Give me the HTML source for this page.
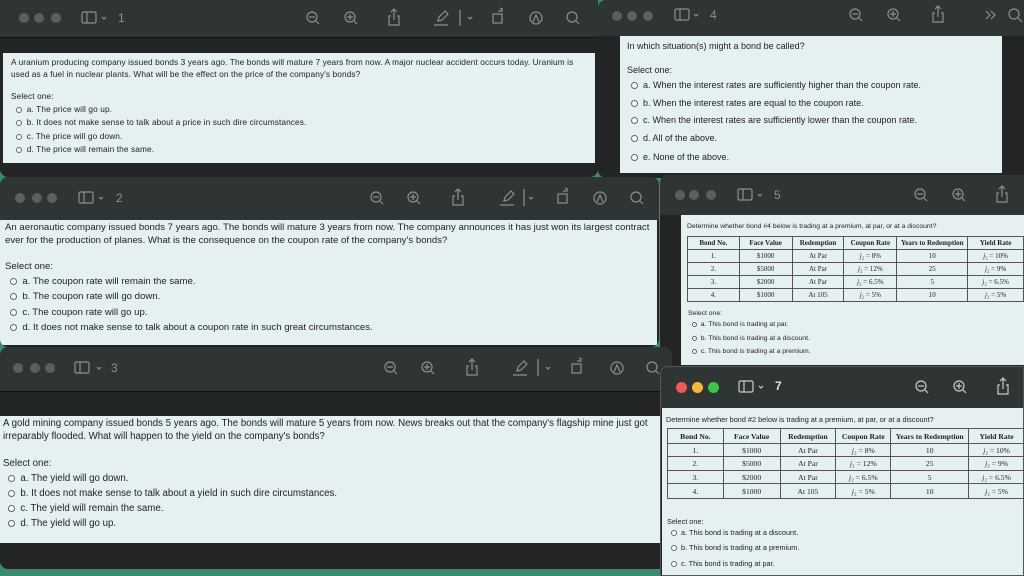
<!DOCTYPE html>
<html><head><meta charset="utf-8">
<style>
*{margin:0;padding:0;box-sizing:border-box}
body{width:1024px;height:576px;overflow:hidden;background:#3d8a72;font-family:"Liberation Sans",sans-serif;position:relative}
.w{position:absolute;background:#232524;border-radius:8px;overflow:hidden}
.tb{position:absolute;left:0;right:0;top:0;background:#2f3532}
.c{position:absolute;background:#e5f0f2;color:#222}
.t{position:absolute;white-space:nowrap;color:#222}
.d{position:absolute;width:10px;height:10px;border-radius:50%;background:#5a605d}
svg.i{position:absolute;overflow:visible}
.rb{display:inline-block;border:1px solid #666;border-radius:50%;background:#fff;vertical-align:middle}
table{position:absolute;border-collapse:collapse;font-family:"Liberation Serif",serif;color:#222;background:#e5f0f2}
td,th{border:1px solid #555;text-align:center;padding:0;font-weight:normal;white-space:nowrap}
th{font-weight:bold}
.num{position:absolute;color:#8a908d;font-size:12px}
</style></head><body>

<!-- Window 4 -->
<div class="w" style="left:598px;top:0;width:426px;height:178px;border-radius:8px 0 0 8px">
 <div class="tb" style="height:36px"></div>
 <div class="d" style="left:14px;top:11px"></div><div class="d" style="left:29px;top:11px"></div><div class="d" style="left:45px;top:11px"></div>
 <svg class="i" style="left:0;top:0" width="426" height="36" fill="none" stroke="#8a908d" stroke-width="1.2">
  <rect x="77" y="9" width="14" height="11" rx="1.5"/><line x1="82" y1="9" x2="82" y2="20"/>
  <path d="M96 14l2 2 2-2"/>
  <circle cx="257" cy="14" r="5"/><line x1="254" y1="14" x2="260" y2="14"/><line x1="261" y1="18" x2="264" y2="21"/>
  <circle cx="295" cy="14" r="5"/><line x1="292" y1="14" x2="298" y2="14"/><line x1="295" y1="11" x2="295" y2="17"/><line x1="299" y1="18" x2="302" y2="21"/>
  <path d="M337 13h-2v9h10v-9h-2M340 17v-11M337 9l3-3 3 3"/>
  <path d="M388 11l4 4-4 4M393 11l4 4-4 4"/>
  <circle cx="416" cy="14" r="5"/><line x1="420" y1="18" x2="424" y2="22"/>
 </svg>
 <div class="num" style="left:112px;top:8px">4</div>
 <div class="c" style="left:22px;top:36px;width:382px;height:137px;font-size:9px">
  <div class="t" style="left:7px;top:5px">In which situation(s) might a bond be called?</div>
  <div class="t" style="left:7px;top:29px">Select one:</div>
  <div class="t" style="left:11px;top:44px"><span class="rb" style="width:7px;height:7px"></span>&nbsp; a. When the interest rates are sufficiently higher than the coupon rate.</div>
  <div class="t" style="left:11px;top:62px"><span class="rb" style="width:7px;height:7px"></span>&nbsp; b. When the interest rates are equal to the coupon rate.</div>
  <div class="t" style="left:11px;top:79px"><span class="rb" style="width:7px;height:7px"></span>&nbsp; c. When the interest rates are sufficiently lower than the coupon rate.</div>
  <div class="t" style="left:11px;top:97px"><span class="rb" style="width:7px;height:7px"></span>&nbsp; d. All of the above.</div>
  <div class="t" style="left:11px;top:116px"><span class="rb" style="width:7px;height:7px"></span>&nbsp; e. None of the above.</div>
 </div>
</div>

<!-- Window 1 -->
<div class="w" style="left:0;top:0;width:598px;height:177px;border-radius:0 0 8px 8px">
 <div class="tb" style="height:38px;border-bottom:1px solid #111"></div>
 <div class="d" style="left:19px;top:13px"></div><div class="d" style="left:34px;top:13px"></div><div class="d" style="left:51px;top:13px"></div>
 <svg class="i" style="left:0;top:0" width="598" height="38" fill="none" stroke="#8a908d" stroke-width="1.2">
  <rect x="82" y="12" width="14" height="11" rx="1.5"/><line x1="87" y1="12" x2="87" y2="23"/>
  <path d="M102 17l2 2 2-2"/>
  <circle cx="312" cy="17" r="5"/><line x1="309" y1="17" x2="315" y2="17"/><line x1="316" y1="21" x2="319" y2="24"/>
  <circle cx="350" cy="17" r="5"/><line x1="347" y1="17" x2="353" y2="17"/><line x1="350" y1="14" x2="350" y2="20"/><line x1="354" y1="21" x2="357" y2="24"/>
  <path d="M391 16h-2v9h10v-9h-2M394 20v-11M391 12l3-3 3 3"/>
  <path d="M438 21l1-4 6-6 3 3-6 6zM434 25h14"/>
  <line x1="460" y1="10" x2="460" y2="26"/><path d="M468 17l2 2 2-2"/>
  <rect x="493" y="14" width="9" height="9"/><path d="M498 11h4v-3M500 8l2 1"/>
  <circle cx="536" cy="18" r="6"/><path d="M533 22l3-7 3 7"/>
  <circle cx="572" cy="17" r="5"/><line x1="576" y1="21" x2="579" y2="24"/>
 </svg>
 <div class="num" style="left:118px;top:11px">1</div>
 <div class="c" style="left:3px;top:53px;width:592px;height:110px;font-size:8.3px;letter-spacing:0.1px">
  <div class="t" style="left:8px;top:4px">A uranium producing company issued bonds 3 years ago. The bonds will mature 7 years from now. A major nuclear accident occurs today. Uranium is</div>
  <div class="t" style="left:8px;top:16px">used as a fuel in nuclear plants. What will be the effect on the price of the company's bonds?</div>
  <div class="t" style="left:8px;top:38px">Select one:</div>
  <div class="t" style="left:13px;top:51px"><span class="rb" style="width:6px;height:6px"></span>&nbsp; a. The price will go up.</div>
  <div class="t" style="left:13px;top:64px"><span class="rb" style="width:6px;height:6px"></span>&nbsp; b. It does not make sense to talk about a price in such dire circumstances.</div>
  <div class="t" style="left:13px;top:78px"><span class="rb" style="width:6px;height:6px"></span>&nbsp; c. The price will go down.</div>
  <div class="t" style="left:13px;top:91px"><span class="rb" style="width:6px;height:6px"></span>&nbsp; d. The price will remain the same.</div>
 </div>
</div>

<!-- Window 5 -->
<div class="w" style="left:660px;top:175px;width:364px;height:192px;border-radius:8px 0 0 0">
 <div class="tb" style="height:40px"></div>
 <div class="d" style="left:15px;top:15px"></div><div class="d" style="left:29px;top:15px"></div><div class="d" style="left:46px;top:15px"></div>
 <svg class="i" style="left:0;top:0" width="364" height="40" fill="none" stroke="#8a908d" stroke-width="1.2">
  <rect x="78" y="14" width="14" height="11" rx="1.5"/><line x1="83" y1="14" x2="83" y2="25"/>
  <path d="M98 19l2 2 2-2"/>
  <circle cx="260" cy="19" r="5"/><line x1="257" y1="19" x2="263" y2="19"/><line x1="264" y1="23" x2="267" y2="26"/>
  <circle cx="298" cy="19" r="5"/><line x1="295" y1="19" x2="301" y2="19"/><line x1="298" y1="16" x2="298" y2="22"/><line x1="302" y1="23" x2="305" y2="26"/>
  <path d="M339 18h-2v9h10v-9h-2M342 22v-11M339 14l3-3 3 3"/>
 </svg>
 <div class="num" style="left:114px;top:13px">5</div>
 <div class="c" style="left:21px;top:40px;width:343px;height:150px;font-size:6.8px">
  <div class="t" style="left:6px;top:8px">Determine whether bond #4 below is trading at a premium, at par, or at a discount?</div>
  <div class="t" style="left:7px;top:95px">Select one:</div>
  <div class="t" style="left:11px;top:106px"><span class="rb" style="width:5px;height:5px"></span>&nbsp; a. This bond is trading at par.</div>
  <div class="t" style="left:11px;top:120px"><span class="rb" style="width:5px;height:5px"></span>&nbsp; b. This bond is trading at a discount.</div>
  <div class="t" style="left:11px;top:133px"><span class="rb" style="width:5px;height:5px"></span>&nbsp; c. This bond is trading at a premium.</div>
 </div>
 <table style="left:27px;top:61px;width:337px;font-size:7px">
  <colgroup><col style="width:52px"><col style="width:53px"><col style="width:52px"><col style="width:53px"><col style="width:71px"><col style="width:56px"></colgroup>
  <tr style="height:13px"><th>Bond No.</th><th>Face Value</th><th>Redemption</th><th>Coupon Rate</th><th>Years to Redemption</th><th>Yield Rate</th></tr>
  <tr style="height:13px"><td>1.</td><td>$1000</td><td>At Par</td><td><i>j</i>₂ = 8%</td><td>10</td><td><i>j</i>₂ = 10%</td></tr>
  <tr style="height:13px"><td>2.</td><td>$5000</td><td>At Par</td><td><i>j</i>₂ = 12%</td><td>25</td><td><i>j</i>₂ = 9%</td></tr>
  <tr style="height:13px"><td>3.</td><td>$2000</td><td>At Par</td><td><i>j</i>₂ = 6.5%</td><td>5</td><td><i>j</i>₂ = 6.5%</td></tr>
  <tr style="height:13px"><td>4.</td><td>$1000</td><td>At 105</td><td><i>j</i>₂ = 5%</td><td>10</td><td><i>j</i>₂ = 5%</td></tr>
 </table>
</div>

<!-- Window 2 -->
<div class="w" style="left:0;top:177px;width:659px;height:170px">
 <div class="tb" style="height:43px"></div>
 <div class="d" style="left:15px;top:16px"></div><div class="d" style="left:32px;top:16px"></div><div class="d" style="left:47px;top:16px"></div>
 <svg class="i" style="left:0;top:0" width="659" height="43" fill="none" stroke="#8a908d" stroke-width="1.2">
  <rect x="79" y="15" width="14" height="11" rx="1.5"/><line x1="84" y1="15" x2="84" y2="26"/>
  <path d="M99 20l2 2 2-2"/>
  <circle cx="376" cy="20" r="5"/><line x1="373" y1="20" x2="379" y2="20"/><line x1="380" y1="24" x2="383" y2="27"/>
  <circle cx="413" cy="20" r="5"/><line x1="410" y1="20" x2="416" y2="20"/><line x1="413" y1="17" x2="413" y2="23"/><line x1="417" y1="24" x2="420" y2="27"/>
  <path d="M455 19h-2v9h10v-9h-2M458 23v-11M455 15l3-3 3 3"/>
  <path d="M504 24l1-4 6-6 3 3-6 6zM500 28h14"/>
  <line x1="524" y1="12" x2="524" y2="29"/><path d="M529 20l2 2 2-2"/>
  <rect x="558" y="17" width="9" height="9"/><path d="M563 14h4v-3M565 11l2 1"/>
  <circle cx="600" cy="21" r="6"/><path d="M597 25l3-7 3 7"/>
  <circle cx="636" cy="20" r="5"/><line x1="640" y1="24" x2="643" y2="27"/>
 </svg>
 <div class="num" style="left:116px;top:14px">2</div>
 <div class="c" style="left:0;top:43px;width:657px;height:125px;font-size:9.6px">
  <div class="t" style="left:5px;top:2px">An aeronautic company issued bonds 7 years ago. The bonds will mature 3 years from now. The company announces it has just won its largest contract</div>
  <div class="t" style="left:5px;top:15px">ever for the production of planes. What is the consequence on the coupon rate of the company's bonds?</div>
  <div class="t" style="left:5px;top:41px">Select one:</div>
  <div class="t" style="left:10px;top:56px"><span class="rb" style="width:7px;height:7px"></span>&nbsp; a. The coupon rate will remain the same.</div>
  <div class="t" style="left:10px;top:71px"><span class="rb" style="width:7px;height:7px"></span>&nbsp; b. The coupon rate will go down.</div>
  <div class="t" style="left:10px;top:87px"><span class="rb" style="width:7px;height:7px"></span>&nbsp; c. The coupon rate will go up.</div>
  <div class="t" style="left:10px;top:102px"><span class="rb" style="width:7px;height:7px"></span>&nbsp; d. It does not make sense to talk about a coupon rate in such great circumstances.</div>
 </div>
</div>

<!-- Window 3 -->
<div class="w" style="left:0;top:347px;width:672px;height:222px">
 <div class="tb" style="height:45px;border-bottom:1px solid #111"></div>
 <div class="d" style="left:13px;top:16px"></div><div class="d" style="left:30px;top:16px"></div><div class="d" style="left:45px;top:16px"></div>
 <svg class="i" style="left:0;top:0" width="672" height="45" fill="none" stroke="#8a908d" stroke-width="1.2">
  <rect x="75" y="15" width="14" height="11" rx="1.5"/><line x1="80" y1="15" x2="80" y2="26"/>
  <path d="M97 20l2 2 2-2"/>
  <circle cx="390" cy="20" r="5"/><line x1="387" y1="20" x2="393" y2="20"/><line x1="394" y1="24" x2="397" y2="27"/>
  <circle cx="427" cy="20" r="5"/><line x1="424" y1="20" x2="430" y2="20"/><line x1="427" y1="17" x2="427" y2="23"/><line x1="431" y1="24" x2="434" y2="27"/>
  <path d="M469 19h-2v9h10v-9h-2M472 23v-11M469 15l3-3 3 3"/>
  <path d="M517 24l1-4 6-6 3 3-6 6zM513 28h14"/>
  <line x1="538" y1="12" x2="538" y2="29"/><path d="M546 20l2 2 2-2"/>
  <rect x="572" y="17" width="9" height="9"/><path d="M577 14h4v-3M579 11l2 1"/>
  <circle cx="617" cy="21" r="6"/><path d="M614 25l3-7 3 7"/>
  <circle cx="652" cy="20" r="5"/><line x1="656" y1="24" x2="659" y2="27"/>
 </svg>
 <div class="num" style="left:111px;top:14px">3</div>
 <div class="c" style="left:0;top:69px;width:660px;height:127px;font-size:9.7px">
  <div class="t" style="left:3px;top:2px">A gold mining company issued bonds 5 years ago. The bonds will mature 5 years from now. News breaks out that the company's flagship mine just got</div>
  <div class="t" style="left:3px;top:15px">irreparably flooded. What will happen to the yield on the company's bonds?</div>
  <div class="t" style="left:3px;top:42px">Select one:</div>
  <div class="t" style="left:8px;top:57px"><span class="rb" style="width:7px;height:7px"></span>&nbsp; a. The yield will go down.</div>
  <div class="t" style="left:8px;top:72px"><span class="rb" style="width:7px;height:7px"></span>&nbsp; b. It does not make sense to talk about a yield in such dire circumstances.</div>
  <div class="t" style="left:8px;top:87px"><span class="rb" style="width:7px;height:7px"></span>&nbsp; c. The yield will remain the same.</div>
  <div class="t" style="left:8px;top:102px"><span class="rb" style="width:7px;height:7px"></span>&nbsp; d. The yield will go up.</div>
 </div>
</div>

<!-- Window 7 -->
<div class="w" style="left:660px;top:366px;width:364px;height:210px;border-radius:8px 0 0 0;border:1px solid #555">
 <div class="tb" style="height:41px"></div>
 <div class="d" style="left:15px;top:15px;width:11px;height:11px;background:#ee5b57"></div>
 <div class="d" style="left:31px;top:15px;width:11px;height:11px;background:#f4b83a"></div>
 <div class="d" style="left:47px;top:15px;width:11px;height:11px;background:#3ec549"></div>
 <svg class="i" style="left:0;top:0" width="364" height="41" fill="none" stroke="#c8cccb" stroke-width="1.2">
  <rect x="78" y="14" width="14" height="11" rx="1.5"/><line x1="83" y1="14" x2="83" y2="25"/>
  <path d="M98 19l2 2 2-2"/>
  <circle cx="260" cy="19" r="5"/><line x1="257" y1="19" x2="263" y2="19"/><line x1="264" y1="23" x2="267" y2="26"/>
  <circle cx="298" cy="19" r="5"/><line x1="295" y1="19" x2="301" y2="19"/><line x1="298" y1="16" x2="298" y2="22"/><line x1="302" y1="23" x2="305" y2="26"/>
  <path d="M339 18h-2v9h10v-9h-2M342 22v-11M339 14l3-3 3 3"/>
 </svg>
 <div class="num" style="left:114px;top:12px;color:#e0e0e0;font-weight:bold">7</div>
 <div class="c" style="left:1px;top:41px;width:363px;height:169px;font-size:7.3px">
  <div class="t" style="left:4px;top:7px">Determine whether bond #2 below is trading at a premium, at par, or at a discount?</div>
  <div class="t" style="left:5px;top:109px">Select one:</div>
  <div class="t" style="left:9px;top:120px"><span class="rb" style="width:6px;height:6px"></span>&nbsp; a. This bond is trading at a discount.</div>
  <div class="t" style="left:9px;top:135px"><span class="rb" style="width:6px;height:6px"></span>&nbsp; b. This bond is trading at a premium.</div>
  <div class="t" style="left:9px;top:151px"><span class="rb" style="width:6px;height:6px"></span>&nbsp; c. This bond is trading at par.</div>
 </div>
 <table style="left:6px;top:61px;width:358px;font-size:7.6px">
  <colgroup><col style="width:56px"><col style="width:57px"><col style="width:56px"><col style="width:55px"><col style="width:78px"><col style="width:56px"></colgroup>
  <tr style="height:15px"><th>Bond No.</th><th>Face Value</th><th>Redemption</th><th>Coupon Rate</th><th>Years to Redemption</th><th>Yield Rate</th></tr>
  <tr style="height:13px"><td>1.</td><td>$1000</td><td>At Par</td><td><i>j</i>₂ = 8%</td><td>10</td><td><i>j</i>₂ = 10%</td></tr>
  <tr style="height:14px"><td>2.</td><td>$5000</td><td>At Par</td><td><i>j</i>₂ = 12%</td><td>25</td><td><i>j</i>₂ = 9%</td></tr>
  <tr style="height:13px"><td>3.</td><td>$2000</td><td>At Par</td><td><i>j</i>₂ = 6.5%</td><td>5</td><td><i>j</i>₂ = 6.5%</td></tr>
  <tr style="height:15px"><td>4.</td><td>$1000</td><td>At 105</td><td><i>j</i>₂ = 5%</td><td>10</td><td><i>j</i>₂ = 5%</td></tr>
 </table>
</div>

</body></html>
